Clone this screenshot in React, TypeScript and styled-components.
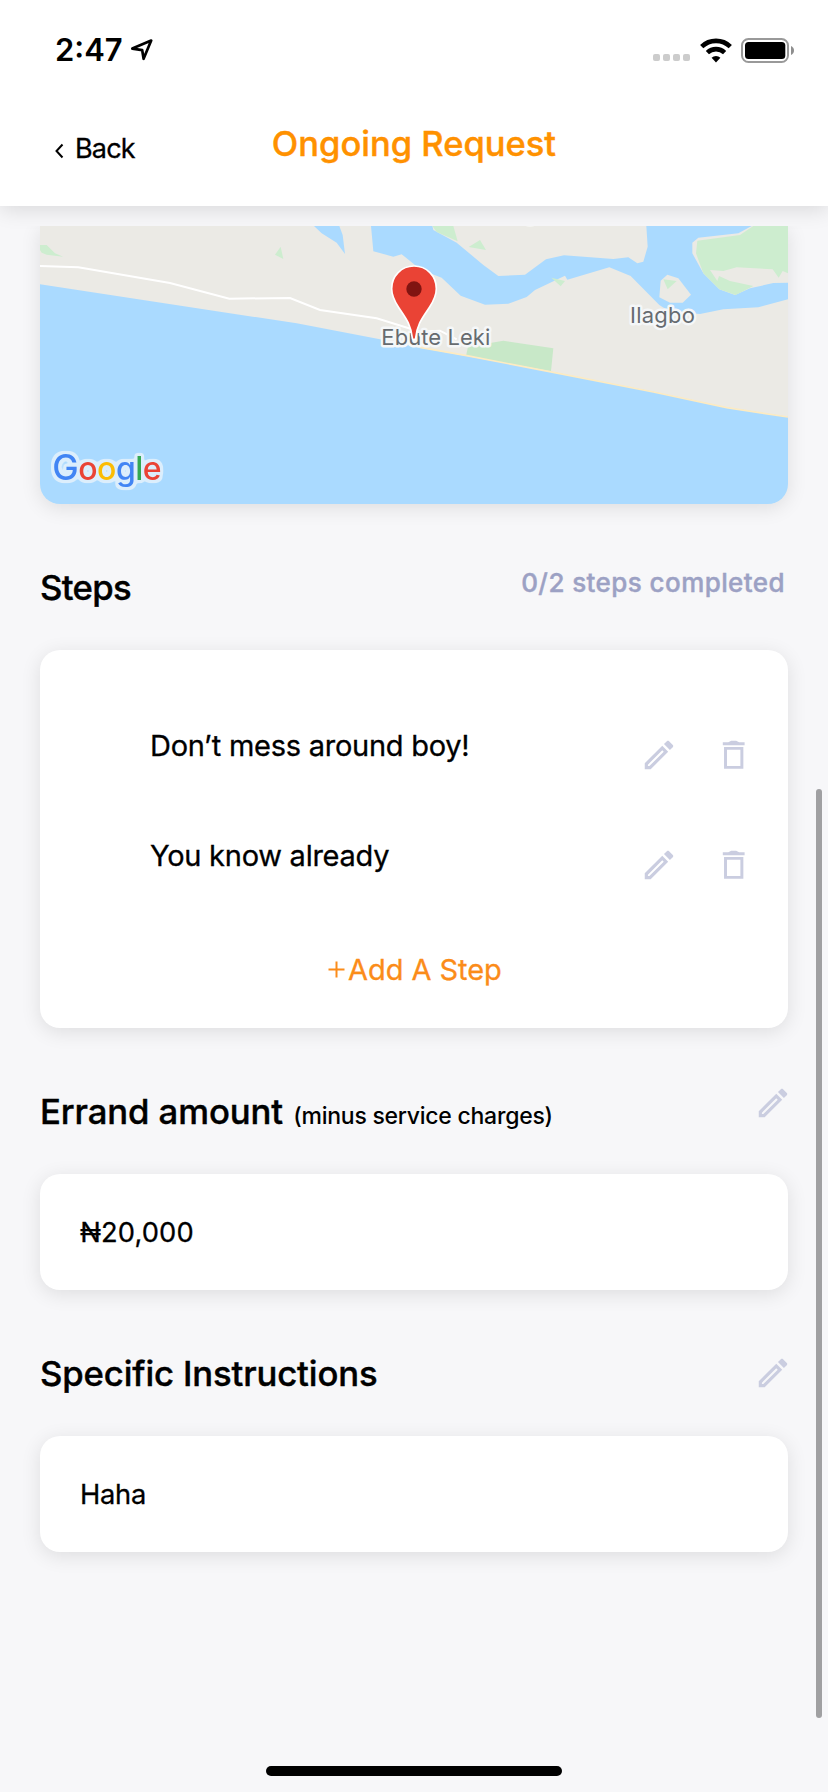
import React from 'react';
import styled, { createGlobalStyle } from 'styled-components';

const GlobalStyle = createGlobalStyle`
  * { box-sizing: border-box; }
  html, body { margin: 0; padding: 0; background: #f7f7f9; }
  body { font-family: Inter, "Liberation Sans", sans-serif; color: #000; overflow: hidden; }
  button { border: 0; padding: 0; background: none; font: inherit; color: inherit; display: flex; }
`;

const Screen = styled.div`
  width: 828px;
  height: 1792px;
  display: flex;
  flex-direction: column;
  position: relative;
  overflow: hidden;
  background: #f7f7f9;
`;

const Header = styled.header`
  flex: none;
  height: 206px;
  background: #fff;
  box-shadow: 0 4px 20px rgba(0, 0, 0, 0.12);
`;

const StatusBar = styled.div`
  height: 100px;
  padding: 0 33px 0 55px;
  display: flex;
  align-items: center;
  justify-content: space-between;
`;

const StatusGroup = styled.div`
  display: flex;
  align-items: center;
`;

const StatusIcons = styled(StatusGroup)`
  svg:last-child { margin-left: 9px; }
`;

const Clock = styled.span`
  font-size: 31px;
  font-weight: 600;
  line-height: 40px;
  margin-right: 7px;
`;

const SignalDots = styled.div`
  display: flex;
  gap: 3px;
  margin: 15px 10px 0 0;
`;

const SignalDot = styled.i`
  width: 7px;
  height: 7px;
  border-radius: 2px;
  background: #ccc;
`;

const NavBar = styled.div`
  height: 106px;
  padding: 0 54px;
  display: grid;
  grid-template-columns: 1fr auto 1fr;
`;

const BackButton = styled.button`
  align-self: start;
  align-items: center;
  margin-top: 28px;
  gap: 11px;
  height: 40px;
  font-size: 27px;
  letter-spacing: -0.8px;
  -webkit-text-stroke: 0.3px;

  svg { margin-top: 6px; }
`;

const Title = styled.h1`
  margin: 24px 0 0;
  font-size: 34.5px;
  font-weight: 500;
  line-height: 40px;
  color: #ff9100;
  -webkit-text-stroke: 0.4px;
`;

const Content = styled.main`
  flex: 1;
  margin-top: 20px;
  padding: 0 40px;
  overflow: hidden;
`;

const cardShadow = '0 4px 20px rgba(0, 0, 0, 0.105)';

const MapCard = styled.div`
  height: 278px;
  border-radius: 0 0 20px 20px;
  overflow: hidden;
  box-shadow: ${cardShadow};

  svg { display: block; }
`;

const Card = styled.div`
  background: #fff;
  border-radius: 20px;
  box-shadow: ${cardShadow};
`;

const StepsCard = styled(Card)`
  height: 378px;
  padding: 50px 36px 0 110px;
`;

const FieldCard = styled(Card)<{ $spacing: string }>`
  height: 116px;
  padding: 0 40px;
  font-size: 27.3px;
  line-height: 117px;
  letter-spacing: ${(p) => p.$spacing};
  -webkit-text-stroke: 0.3px;
`;

const SectionHead = styled.div`
  height: 146px;
  display: flex;
  justify-content: space-between;
  align-items: flex-start;
`;

const Heading = styled.h2<{ $spacing?: string }>`
  margin: 63px 0 0;
  font-size: 34.7px;
  font-weight: 500;
  line-height: 40px;
  letter-spacing: ${(p) => p.$spacing ?? '-0.1px'};
  -webkit-text-stroke: 0.4px;
`;

const HeadingNote = styled.small`
  font-size: 23px;
  letter-spacing: -0.25px;
  margin-left: 1px;
  -webkit-text-stroke: 0;
`;

const Progress = styled.span`
  margin: 59px 3px 0 0;
  font-size: 26px;
  font-weight: 500;
  line-height: 40px;
  letter-spacing: 0.42px;
  color: #9ca1c4;
  -webkit-text-stroke: 0.4px;
`;

const IconButton = styled.button`
  color: #cacde0;
`;

const EditButton = styled(IconButton)<{ $top: number }>`
  margin: ${(p) => p.$top}px -4px 0 0;
`;

const StepRow = styled.div`
  height: 110px;
  display: flex;
  align-items: center;
  justify-content: space-between;
`;

const StepText = styled.span`
  font-size: 29px;
  line-height: 40px;
  letter-spacing: -0.26px;
  padding-bottom: 19px;
  -webkit-text-stroke: 0.3px;
`;

const StepActions = styled.div`
  display: flex;
  gap: 37px;
`;

const AddStep = styled.button`
  margin: 29px 0 0 178px;
  height: 40px;
  align-items: center;
  gap: 3px;
  font-size: 29px;
  letter-spacing: -0.06px;
  white-space: nowrap;
  color: #fb8c1a;
  -webkit-text-stroke: 0.3px;
`;

const ScrollThumb = styled.div`
  position: absolute;
  right: 6px;
  top: 789px;
  width: 6px;
  height: 929px;
  border-radius: 3px;
  background: #a0a0a2;
`;

const HomeIndicator = styled.div`
  position: absolute;
  left: 266px;
  bottom: 16px;
  width: 296px;
  height: 10px;
  border-radius: 5px;
  background: #000;
`;

const LocationIcon = () => (
  <svg width="24" height="24" viewBox="0 0 24 24" fill="none" stroke="#000" strokeWidth="2.7" strokeLinejoin="round">
    <path d="M2.3 10.6 21.2 2.6 13.6 20.8 12.2 12.2Z" />
  </svg>
);

const WifiIcon = () => (
  <svg width="32" height="25" viewBox="0 0 32 25">
    <g fill="none" stroke="#000" strokeWidth="4.6">
      <path d="M1.7 8.6a20.6 20.6 0 0 1 28.6 0" />
      <path d="M7.4 14.6a12.5 12.5 0 0 1 17.2 0" />
    </g>
    <path d="M11.6 19.7a6.6 6.6 0 0 1 8.8 0L16 24.5Z" />
  </svg>
);

const BatteryIcon = () => (
  <svg width="54" height="25" viewBox="0 0 54 25">
    <rect x="1" y="1" width="46" height="23" rx="6.5" fill="none" stroke="#999" strokeWidth="2" />
    <rect x="4" y="4" width="40.3" height="17" rx="3.5" />
    <path d="M50 8v9c1.8-.6 3-2.4 3-4.5S51.8 8.6 50 8Z" fill="#8e8e8e" />
  </svg>
);

const PencilIcon = () => (
  <svg width="38" height="38" viewBox="0 0 24 24" fill="currentColor">
    <path d="M14.06 9l.94.94L5.92 19H5v-.92L14.06 9m3.6-6c-.25 0-.51.1-.7.29l-1.83 1.83 3.75 3.75 1.83-1.83c.39-.39.39-1.04 0-1.41l-2.34-2.34c-.2-.2-.45-.29-.71-.29m-3.6 3.19L3 17.25V21h3.75L17.81 9.94l-3.75-3.75Z" />
  </svg>
);

const TrashIcon = () => (
  <svg width="37.4" height="37.4" viewBox="0 0 24 24" fill="currentColor">
    <path d="M14.5 3.5 13.6 3h-3.2l-.9.5L8.5 4H5v2h14V4h-3.5Z" />
    <path d="M5.8 7h12.4v14H5.8Zm1.9 1.8v10.4h8.6V8.8Z" fillRule="evenodd" />
  </svg>
);

const ShoreMap = () => (
  <svg width="748" height="278" viewBox="60 48 2244 834">
    <defs>
      <filter id="halo" x="-10%" y="-20%" width="120%" height="140%" colorInterpolationFilters="sRGB">
        <feMorphology in="SourceAlpha" operator="dilate" radius="7" result="grown" />
        <feGaussianBlur in="grown" stdDeviation="4" result="soft" />
        <feComponentTransfer in="soft" result="edge">
          <feFuncA type="linear" slope="5" intercept="-0.6" />
        </feComponentTransfer>
        <feFlood floodColor="#dceefc" />
        <feComposite in2="edge" operator="in" result="rim" />
        <feMerge>
          <feMergeNode in="rim" />
          <feMergeNode in="SourceGraphic" />
        </feMerge>
      </filter>
    </defs>
    <rect x="60" y="48" width="2244" height="834" fill="#ebeae5" />
    <g fill="#aadaff">
      <path d="M60 223 830 340 1080 388 1200 413 1340 438 1600 486 1900 545 2120 592 2304 620V882H60Z" />
      <path d="M882 48 905 70 950 98 975 132 968 75 958 48Z" />
      <path d="M1053 48 1060 124 1120 140 1145 133 1185 165 1230 190 1265 203 1322 257 1395 284 1465 281 1520 261 1545 240 1635 197 1642 209 1768 172 1832 198 1918 285 1950 305 2040 312 2110 298 2215 292 2304 268V48H1879L1883 110 1870 155 1852 160 1825 142 1780 147 1632 136 1578 148 1515 194 1435 198 1390 165 1310 98 1240 60 1237 48Z" />
    </g>
    <g fill="#ebeae5">
      <path d="M1942 194 1975 205 2013 254 1988 278H1950L1918 262 1922 212Z" />
      <path d="M2195 48 2155 70 2035 83 2017 98V130L2050 190 2098 238 2145 255 2190 235 2260 219 2304 218V48Z" />
    </g>
    <g fill="#cdedcf">
      <path d="M60 105H80L105 130 130 140 80 134 65 128 60 120Z" />
      <path d="M782 110 790 147 765 134Z" />
      <path d="M1237 48H1300L1313 94 1250 66Z" />
      <path d="M1380 90 1398 120 1346 111Z" />
      <path d="M1594 203 1635 213 1622 229Z" />
      <path d="M1930 208 1970 213 1943 238Z" />
      <path d="M2032 92 2160 75 2200 48H2304V190L2288 183 2276 203 2258 178 2150 172 2110 183 2070 180 2092 213 2097 198 2130 213 2200 228 2147 255 2098 238 2050 190 2028 130Z" />
    </g>
    <path d="M1338 438 1344 410 1450 392 1600 415 1593 484Z" fill="#c8e8c8" />
    <ellipse cx="1530" cy="46" rx="14" ry="4" fill="#f8f8f6" />
    <path d="M1200 412 1340 437 1600 487 1900 546 2120 593 2304 621" fill="none" stroke="#fdebc2" strokeWidth="5" />
    <path d="M60 168 175 172 450 219 628 266 810 264 900 300 1070 325 1200 365 1260 362 1310 388" fill="none" stroke="#fff" strokeWidth="6" />
    <g fontFamily="Inter, sans-serif" fontSize="66" fill="#666b70" stroke="#f5f7f8" strokeWidth="15" strokeLinejoin="round" paintOrder="stroke">
      <text x="1084" y="405" textLength="327">Ebute Leki</text>
      <text x="1830" y="339" textLength="195">Ilagbo</text>
    </g>
    <path d="M1182 168c-38 0-67 30-67 68 0 20 8 36 20 55C1155 322 1172 340 1177 384a5 5 0 0 0 10 0C1192 340 1209 322 1229 291c12-19 20-35 20-55 0-38-29-68-67-68Z" fill="#ea4335" stroke="#fff" strokeWidth="5" />
    <circle cx="1182" cy="237" r="23" fill="#811411" />
    <text x="97" y="810" fontFamily="Inter, sans-serif" fontSize="96" fontWeight="500" letterSpacing="-1.5" filter="url(#halo)">
      <tspan fill="#4285f4" fontSize="106">G</tspan>
      <tspan fill="#ea4335">o</tspan>
      <tspan fill="#fbbc05">o</tspan>
      <tspan fill="#4285f4">g</tspan>
      <tspan fill="#34a853">l</tspan>
      <tspan fill="#ea4335">e</tspan>
    </text>
  </svg>
);

const steps = ['Don’t mess around boy!', 'You know already'];

export default function App() {
  return (
    <Screen>
      <GlobalStyle />
      <Header>
        <StatusBar>
          <StatusGroup>
            <Clock>2:47</Clock>
            <LocationIcon />
          </StatusGroup>
          <StatusIcons>
            <SignalDots>
              <SignalDot />
              <SignalDot />
              <SignalDot />
              <SignalDot />
            </SignalDots>
            <WifiIcon />
            <BatteryIcon />
          </StatusIcons>
        </StatusBar>
        <NavBar>
          <BackButton>
            <svg width="10" height="16" viewBox="0 0 10 16" fill="none" stroke="#000" strokeWidth="2">
              <path d="M8.5 1.5 2.5 8l6 6.5" />
            </svg>
            Back
          </BackButton>
          <Title>Ongoing Request</Title>
        </NavBar>
      </Header>

      <Content>
        <MapCard>
          <ShoreMap />
        </MapCard>

        <SectionHead>
          <Heading $spacing="-0.65px">Steps</Heading>
          <Progress>0/2 steps completed</Progress>
        </SectionHead>
        <StepsCard>
          {steps.map((step) => (
            <StepRow key={step}>
              <StepText>{step}</StepText>
              <StepActions>
                <IconButton><PencilIcon /></IconButton>
                <IconButton><TrashIcon /></IconButton>
              </StepActions>
            </StepRow>
          ))}
          <AddStep>
            <svg width="17" height="17" viewBox="0 0 17 17" stroke="currentColor" strokeWidth="2">
              <path d="M8.5 .5v16M.5 8.5h16" />
            </svg>
            Add A Step
          </AddStep>
        </StepsCard>

        <SectionHead>
          <Heading>
            Errand amount <HeadingNote>(minus service charges)</HeadingNote>
          </Heading>
          <EditButton $top={56}><PencilIcon /></EditButton>
        </SectionHead>
        <FieldCard $spacing="0.1px">₦20,000</FieldCard>

        <SectionHead>
          <Heading $spacing="-0.14px">Specific Instructions</Heading>
          <EditButton $top={64}><PencilIcon /></EditButton>
        </SectionHead>
        <FieldCard $spacing="-0.25px">Haha</FieldCard>
      </Content>

      <ScrollThumb />
      <HomeIndicator />
    </Screen>
  );
}
